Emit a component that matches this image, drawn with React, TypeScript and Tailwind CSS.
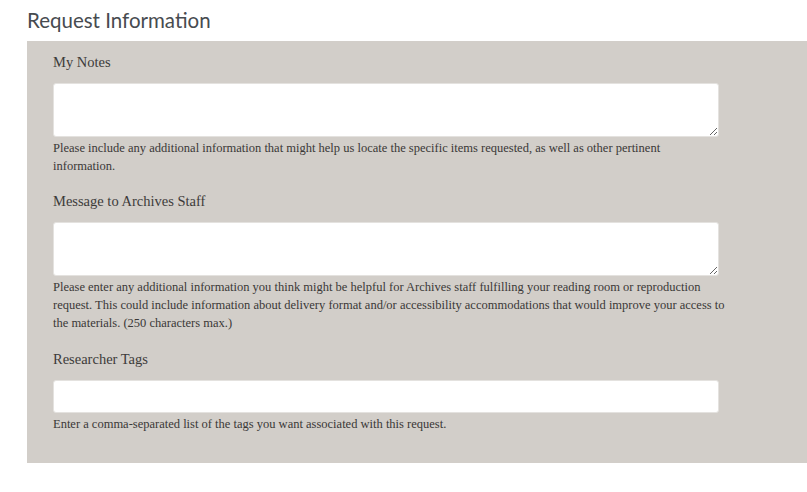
import React from "react";

const serif = "font-['Liberation_Serif','Times_New_Roman',serif]";

function Field({
  label,
  help,
  tall,
  className = "",
  helpWidth = "w-[666px]",
}: {
  label: string;
  help: string;
  tall?: boolean;
  className?: string;
  helpWidth?: string;
}) {
  return (
    <div className={className}>
      <label className={`block ${serif} text-[14.5px] leading-[22px] text-[#3d3b3a]`}>{label}</label>
      {tall ? (
        <textarea className="mt-[10px] block w-[666px] h-[54px] rounded-[3px] border border-[#e4e2df] bg-white resize-y outline-none" />
      ) : (
        <input
          type="text"
          className="mt-[10px] block w-[666px] h-[33px] rounded-[3px] border border-[#e4e2df] bg-white outline-none"
        />
      )}
      <p className={`mt-[2px] ${helpWidth} ${serif} text-[12.5px] leading-[18px] text-[#3a3837]`}>{help}</p>
    </div>
  );
}

export default function App() {
  return (
    <div className="w-[807px] h-[492px] bg-white overflow-hidden">
      <h2 className="pl-[27px] pt-[5px] h-[41px] font-['Lato','Open_Sans',sans-serif] text-[20.5px] leading-[30px] text-[#474b50]">
        Request Information
      </h2>
      <div className="ml-[27px] bg-[#d2cec9] pl-[26px] pt-[10px] pb-[30px]">
        <Field
          label="My Notes"
          tall
          help="Please include any additional information that might help us locate the specific items requested, as well as other pertinent information."
        />
        <Field
          className="mt-[15px]"
          label="Message to Archives Staff"
          tall
          helpWidth="w-[676px]"
          help="Please enter any additional information you think might be helpful for Archives staff fulfilling your reading room or reproduction request. This could include information about delivery format and/or accessibility accommodations that would improve your access to the materials. (250 characters max.)"
        />
        <Field
          className="mt-[16px]"
          label="Researcher Tags"
          help="Enter a comma-separated list of the tags you want associated with this request."
        />
      </div>
    </div>
  );
}
